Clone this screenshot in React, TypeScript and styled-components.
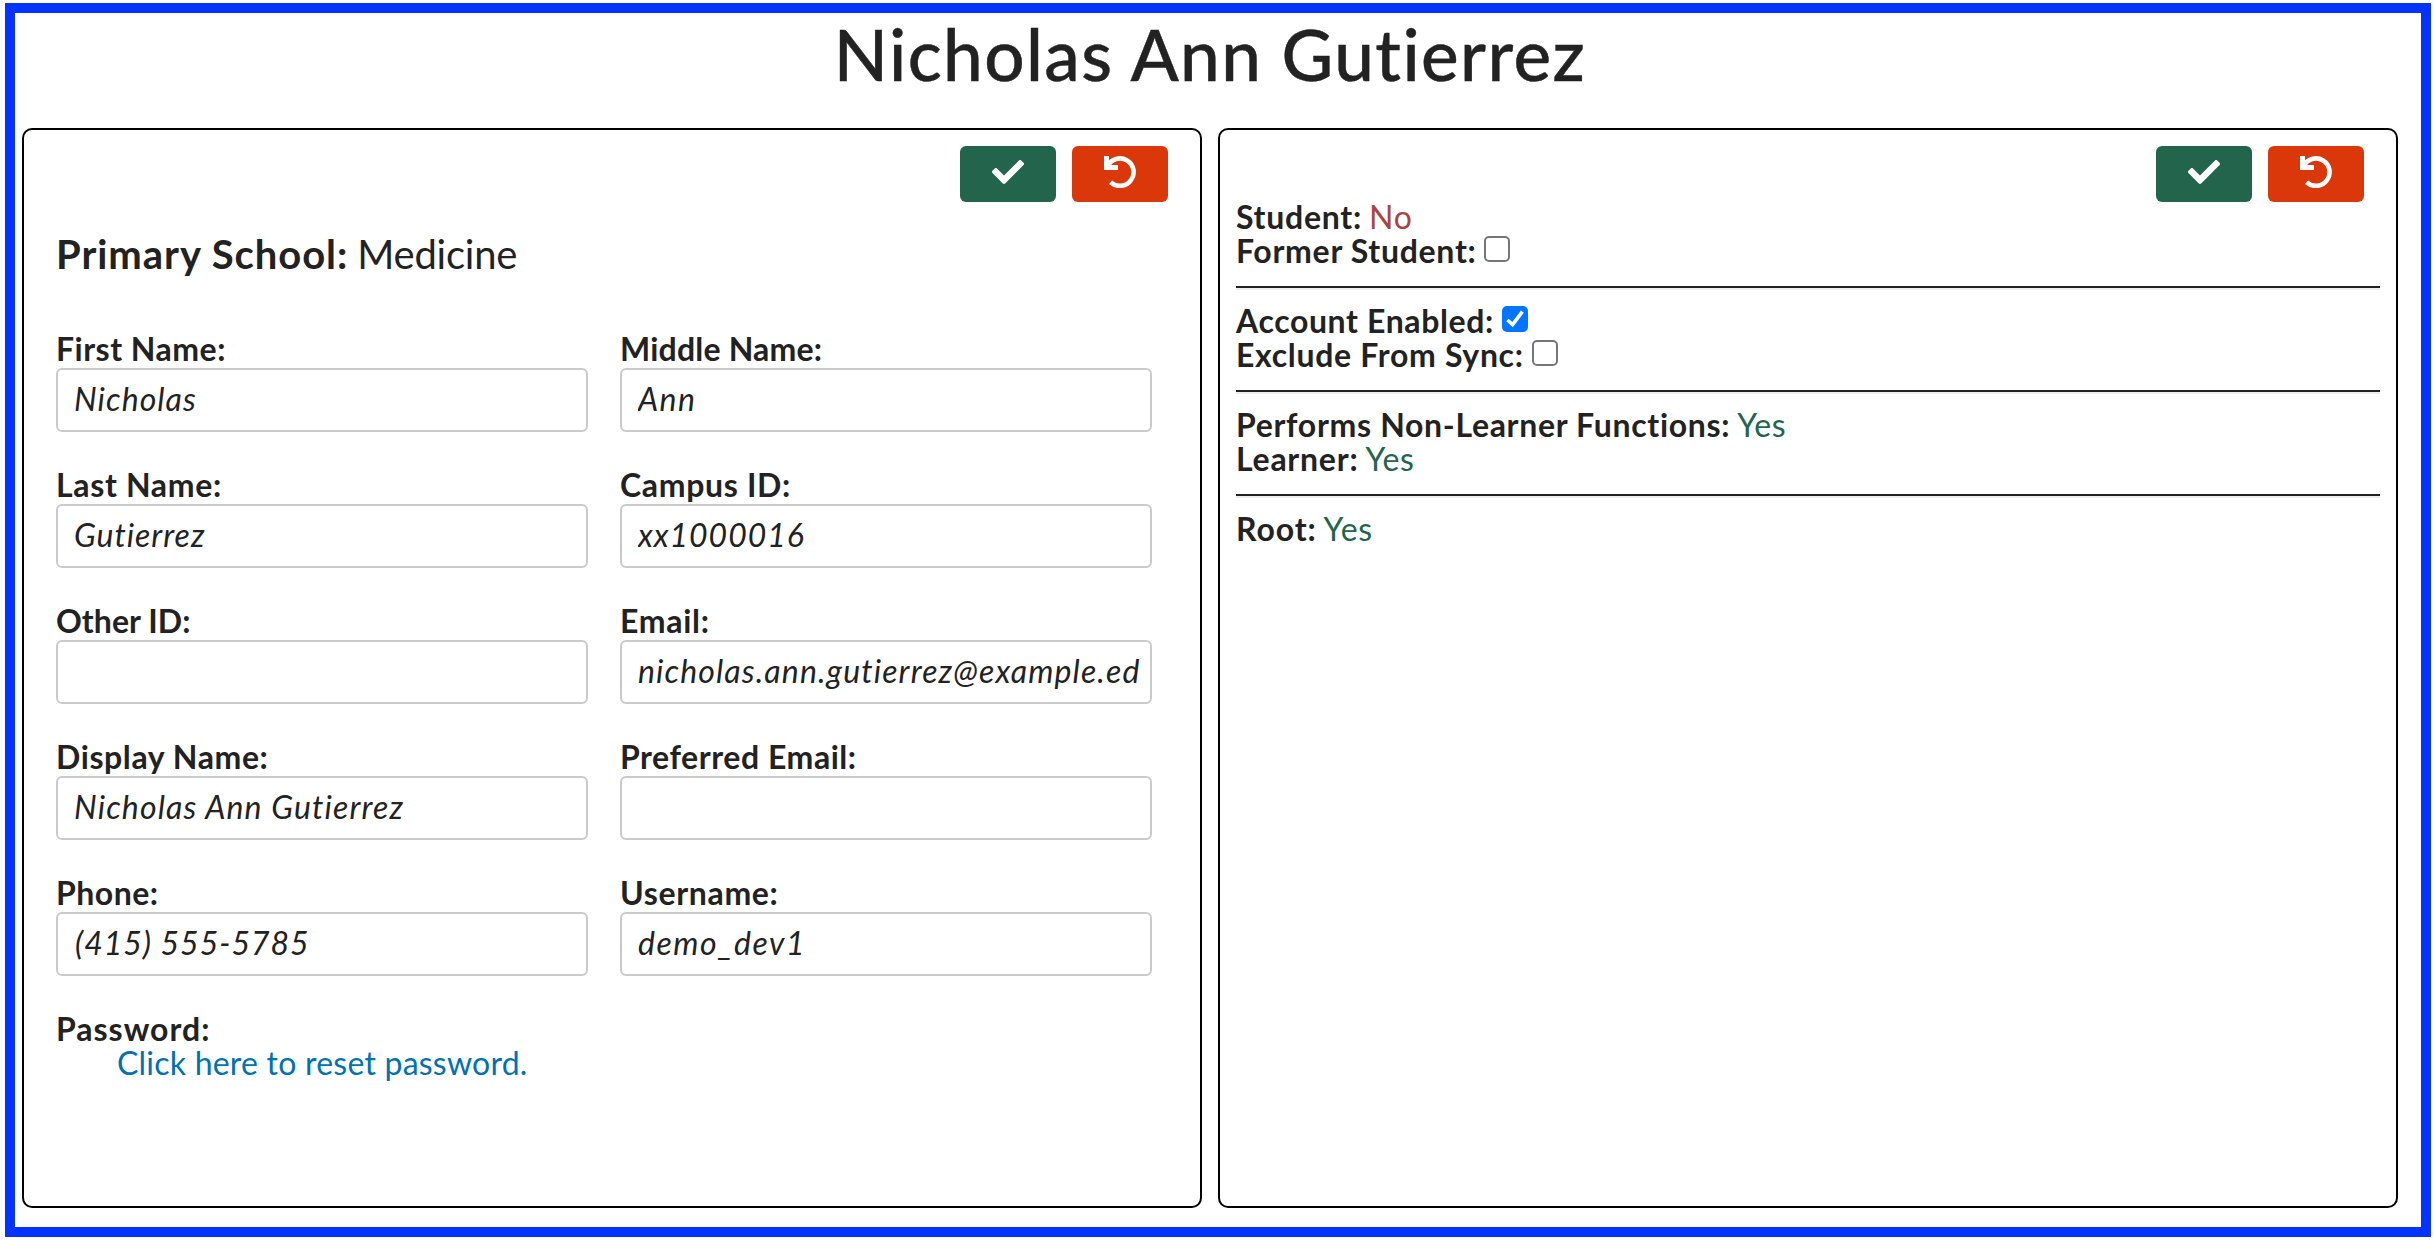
import React from "react";
import styled, { createGlobalStyle } from "styled-components";

const GlobalStyle = createGlobalStyle`
  *, *::before, *::after { box-sizing: border-box; }
  body {
    margin: 0;
    background: #fff;
    color: #222;
    font-family: Lato, "Open Sans", sans-serif;
    font-size: 32px;
    line-height: 34px;
    font-variant-ligatures: none;
  }
`;

const Frame = styled.main`
  display: flex;
  flex-direction: column;
  height: 1234px;
  width: 2426px;
  margin: 3px 3px 3px 5px;
  padding: 0 23px 19px 7px;
  border: 10px solid #0432ff;
`;

const Title = styled.h1`
  margin: 0;
  height: 115px;
  padding-top: 8px;
  font-size: 71px;
  font-weight: 500;
  line-height: 66px;
  letter-spacing: 1.4px;
  text-align: center;
  -webkit-text-stroke: 0.4px #222;
`;

const Panels = styled.div`
  flex: 1;
  display: grid;
  grid-template-columns: 1180px 1180px;
  gap: 16px;
`;

const Panel = styled.section<{ $inset: number }>`
  padding: 16px ${(p) => p.$inset}px 0;
  border: 2px solid #000;
  border-radius: 10px;
`;

const Actions = styled.div<{ $height: number; $end: number }>`
  display: flex;
  justify-content: flex-end;
  align-items: flex-start;
  gap: 16px;
  height: ${(p) => p.$height}px;
  margin-right: ${(p) => p.$end}px;
`;

const ActionButton = styled.button<{ $color: string }>`
  flex: none;
  display: flex;
  justify-content: center;
  width: 96px;
  height: 56px;
  padding: 10px 0 0;
  border: 0;
  border-radius: 6px;
  background: ${(p) => p.$color};
  color: #fff;
`;

const School = styled.h2`
  display: flex;
  gap: 9px;
  margin: 0 0 54px;
  font-size: 40px;
  line-height: 48px;
`;

const Fields = styled.div`
  display: grid;
  grid-template-columns: 532px 532px;
  column-gap: 32px;
  row-gap: 35px;
`;

const Text = styled.span<{ $track: number; $bold?: boolean; $color?: string }>`
  display: block;
  font-weight: ${(p) => (p.$bold ? 700 : 400)};
  letter-spacing: ${(p) => p.$track}px;
  color: ${(p) => p.$color ?? "inherit"};
  white-space: nowrap;
`;

const Input = styled.input<{ $track: number; $indent?: number }>`
  display: block;
  width: 100%;
  height: 64px;
  margin-top: 2px;
  padding: 0 6px 3px 16px;
  border: 2px solid #cacaca;
  border-radius: 6px;
  background: #fff;
  color: #222;
  font: italic 400 32px Lato, "Open Sans", sans-serif;
  letter-spacing: ${(p) => p.$track}px;
  text-indent: ${(p) => p.$indent ?? 0}px;
  font-variant-ligatures: none;
`;

const FieldLabel = styled.label`
  display: block;
  height: 101px;
`;

const ResetLink = styled.a`
  display: block;
  padding-left: 61px;
  color: #0072b1;
  letter-spacing: 0.22px;
`;

const Line = styled.div`
  display: flex;
  gap: 7px;
  height: 34px;
  line-height: 36px;
`;

const Rule = styled.hr`
  height: 4px;
  margin: 19px 0 13px;
  border: 0;
  border-top: 2px solid #222;
  background: #eee;
`;

const Box = styled.span<{ $on?: boolean }>`
  display: flex;
  width: 26px;
  height: 26px;
  margin: 3px 0 0 1px;
  border: 2px solid ${(p) => (p.$on ? "#0075ff" : "#767676")};
  border-radius: 5px;
  background: ${(p) => (p.$on ? "#0075ff" : "#fff")};
`;

const CheckIcon = () => (
  <svg width="32" height="32" viewBox="0 0 512 512" fill="currentColor">
    <path d="M173.898 439.404l-166.4-166.4c-9.997-9.997-9.997-26.206 0-36.204l36.203-36.204c9.997-9.998 26.207-9.998 36.204 0L192 312.69 432.095 72.596c9.997-9.997 26.207-9.997 36.204 0l36.203 36.204c9.997 9.997 9.997 26.206 0 36.204l-294.4 294.401c-9.998 9.997-26.207 9.997-36.204-.001z" />
  </svg>
);

const UndoIcon = () => (
  <svg width="32" height="32" viewBox="0 0 32 32" fill="none" stroke="currentColor">
    <path d="M0 0H5V9H14V14H0Z" fill="currentColor" stroke="none" />
    <path d="M3.6 10.2A13.7 13.7 0 1 1 6.6 26.2" strokeWidth="4.6" />
  </svg>
);

const SaveAndReset = ({ height, end }: { height: number; end: number }) => (
  <Actions $height={height} $end={end}>
    <ActionButton $color="#23654c" aria-label="Save">
      <CheckIcon />
    </ActionButton>
    <ActionButton $color="#da370b" aria-label="Reset">
      <UndoIcon />
    </ActionButton>
  </Actions>
);

type Field = { label: string; track: number; value: string; valueTrack: number; indent?: number };

const fields: Field[] = [
  { label: "First Name:", track: 0.5, value: "Nicholas", valueTrack: 1.07 },
  { label: "Middle Name:", track: 0.2, value: "Ann", valueTrack: 1.4 },
  { label: "Last Name:", track: 0.66, value: "Gutierrez", valueTrack: 0.98 },
  { label: "Campus ID:", track: 0.66, value: "xx1000016", valueTrack: 0.95 },
  { label: "Other ID:", track: 0.05, value: "", valueTrack: 0 },
  { label: "Email:", track: 0.7, value: "nicholas.ann.gutierrez@example.ed", valueTrack: 1.12 },
  { label: "Display Name:", track: 0.6, value: "Nicholas Ann Gutierrez", valueTrack: 1.14 },
  { label: "Preferred Email:", track: 0.55, value: "", valueTrack: 0 },
  { label: "Phone:", track: 0.5, value: "(415) 555-5785", valueTrack: 0.98, indent: 1 },
  { label: "Username:", track: 0.66, value: "demo_dev1", valueTrack: 1.55 },
];

const Status = ({ label, track, yes }: { label: string; track: number; yes: boolean }) => (
  <Line>
    <Text $bold $track={track}>{label}</Text>
    <Text $track={yes ? 0.6 : 0.9} $color={yes ? "#23654c" : "#a94442"}>{yes ? "Yes" : "No"}</Text>
  </Line>
);

const Toggle = ({ label, track, on }: { label: string; track: number; on?: boolean }) => (
  <Line>
    <Text $bold $track={track}>{label}</Text>
    <Box $on={on} role="checkbox" aria-checked={!!on}>
      {on && (
        <svg width="22" height="22" viewBox="0 0 22 22" fill="none" stroke="#fff" strokeWidth="3.6">
          <path d="M3.4 12L8.6 16.6L18.4 3.6" />
        </svg>
      )}
    </Box>
  </Line>
);

export default function App() {
  return (
    <>
      <GlobalStyle />
      <Frame>
        <Title>Nicholas Ann Gutierrez</Title>
        <Panels>
          <Panel $inset={32}>
            <SaveAndReset height={84} end={0} />
            <School>
              <Text $bold $track={0.95}>Primary School:</Text>
              <Text $track={-0.24}>Medicine</Text>
            </School>
            <Fields>
              {fields.map((f) => (
                <FieldLabel key={f.label}>
                  <Text $bold $track={f.track}>{f.label}</Text>
                  <Input $track={f.valueTrack} $indent={f.indent} defaultValue={f.value} />
                </FieldLabel>
              ))}
              <div>
                <Text $bold $track={1}>Password:</Text>
                <ResetLink>Click here to reset password.</ResetLink>
              </div>
            </Fields>
          </Panel>
          <Panel $inset={16}>
            <SaveAndReset height={53} end={16} />
            <Status label="Student:" track={0.74} yes={false} />
            <Toggle label="Former Student:" track={0.7} />
            <Rule />
            <Toggle label="Account Enabled:" track={0.62} on />
            <Toggle label="Exclude From Sync:" track={0.68} />
            <Rule />
            <Status label="Performs Non-Learner Functions:" track={0.68} yes />
            <Status label="Learner:" track={0.75} yes />
            <Rule />
            <Status label="Root:" track={0.9} yes />
          </Panel>
        </Panels>
      </Frame>
    </>
  );
}
